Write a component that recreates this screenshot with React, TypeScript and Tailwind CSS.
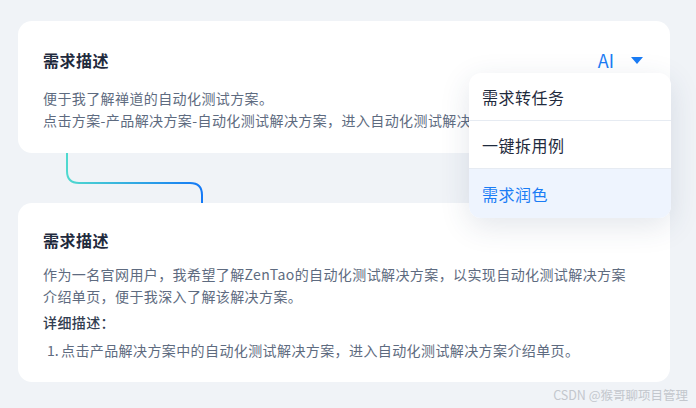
import React from "react";

export default function App() {
  const font = { fontFamily: '"Noto Sans CJK SC", "Noto Sans", sans-serif' };
  return (
    <div
      className="relative w-[696px] h-[408px] overflow-hidden bg-[#f0f3f7] pt-[21px] pl-[18px]"
      style={font}
    >
      {/* Card 1 */}
      <div className="w-[652px] rounded-[14px] bg-white pt-[27px] pb-[22px] px-[25px]">
        <div className="flex items-center justify-between h-[24px]">
          <div className="text-[16px] leading-[24px] font-bold tracking-[0.5px] text-[#1f2a3d]">需求描述</div>
          <div className="flex items-center mr-[2px]">
            <span className="text-[18px] leading-[24px] text-[#1a7cf5]">AI</span>
            <svg className="ml-[17px]" width="12" height="7" viewBox="0 0 12 7">
              <path d="M0 0 H12 L6 7 Z" fill="#1a7cf5" />
            </svg>
          </div>
        </div>
        <div className="mt-[15px] text-[14px] leading-[22px] tracking-[0.4px] text-[#5e6b80] whitespace-nowrap overflow-hidden">
          <div>便于我了解禅道的自动化测试方案。</div>
          <div>点击方案-产品解决方案-自动化测试解决方案，进入自动化测试解决方案介绍单页。</div>
        </div>
      </div>

      {/* Connector */}
      <svg width="652" height="50" viewBox="0 0 652 50" className="block">
        <defs>
          <linearGradient id="conn" gradientUnits="userSpaceOnUse" x1="49" y1="0" x2="184" y2="0">
            <stop offset="0" stopColor="#4fd9cf" />
            <stop offset="1" stopColor="#1479f6" />
          </linearGradient>
        </defs>
        <path
          d="M49 0 V18 Q49 30 61 30 H172 Q184 30 184 42 V50"
          fill="none"
          stroke="url(#conn)"
          strokeWidth="2"
        />
      </svg>

      {/* Card 2 */}
      <div className="w-[652px] rounded-[14px] bg-white pt-[25px] pb-[21px] px-[25px]">
        <div className="text-[16px] leading-[24px] font-bold tracking-[0.5px] text-[#1f2a3d]">需求描述</div>
        <div className="mt-[11px] text-[14px] leading-[22px] tracking-[0.4px] text-[#5e6b80]">
          <div className="whitespace-nowrap">作为一名官网用户，我希望了解ZenTao的自动化测试解决方案，以实现自动化测试解决方案</div>
          <div>介绍单页，便于我深入了解该解决方案。</div>
        </div>
        <div className="mt-[4px] text-[14px] leading-[22px] tracking-[0.4px] font-medium text-[#323d50]">详细描述：</div>
        <div className="mt-[6px] flex text-[14px] leading-[22px] tracking-[0.4px] text-[#5e6b80]">
          <span className="pl-[4px] w-[18px] tracking-normal">1.</span>
          <span>点击产品解决方案中的自动化测试解决方案，进入自动化测试解决方案介绍单页。</span>
        </div>
      </div>

      {/* Dropdown menu */}
      <div className="absolute left-[469px] top-[73px] w-[202px] rounded-[12px] bg-white overflow-hidden shadow-[0_8px_30px_rgba(40,60,100,0.13)]">
        <div className="h-[48px] flex items-center px-[13px] text-[16px] tracking-[0.5px] text-[#1f2a3d] border-b border-[#e6ebf2]">
          需求转任务
        </div>
        <div className="h-[48px] flex items-center px-[13px] text-[16px] tracking-[0.5px] text-[#1f2a3d] border-b border-[#e6ebf2]">
          一键拆用例
        </div>
        <div className="h-[49px] flex items-center px-[13px] text-[16px] tracking-[0.5px] text-[#1a7cf5] bg-[#eef4fe]">
          需求润色
        </div>
      </div>

      {/* Watermark */}
      <div className="absolute right-[8px] bottom-[5px] text-[12.5px] leading-[16px] text-[#c3c7cd]">
        CSDN @猴哥聊项目管理
      </div>
    </div>
  );
}
